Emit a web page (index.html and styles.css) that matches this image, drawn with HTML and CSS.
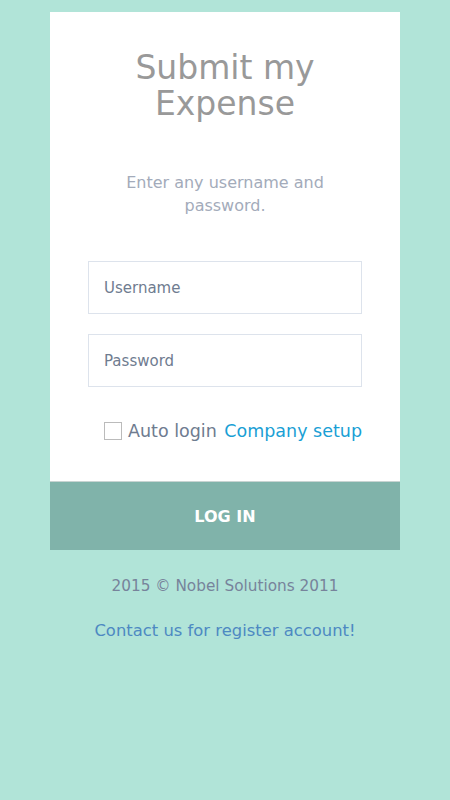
FILE: index.html
```html
<!DOCTYPE html>
<html lang="en">
<head>
  <meta charset="UTF-8">
  <meta name="viewport" content="width=device-width, initial-scale=1.0">
  <title>Submit my Expense</title>
  <link rel="stylesheet" href="styles.css">
</head>
<body>
  <!-- Login Card -->
  <section class="login-card">
    <div class="login-body">
      <h1>Submit my Expense</h1>
      <p class="hint">Enter any username and password.</p>

      <input type="text" class="field" placeholder="Username">
      <input type="password" class="field" placeholder="Password">

      <div class="options">
        <label class="auto-login">
          <span class="box"></span>
          Auto login
        </label>
        <a href="#" class="setup">Company setup</a>
      </div>
    </div>
    <button class="login-btn">LOG IN</button>
  </section>

  <!-- Footer -->
  <footer>
    <p class="copy">2015 &copy; Nobel Solutions 2011</p>
    <a href="#" class="contact">Contact us for register account!</a>
  </footer>
</body>
</html>
```

FILE: styles.css
```css
body {
  font-family: "DejaVu Sans", sans-serif;
  margin: 0;
  padding: 0;
  background-color: #b1e4d8;
  color: #333;
}
.login-card {
  width: 350px;
  margin: 12px auto 0;
  background-color: #fff;
}
.login-body {
  padding: 38px 38px 40px;
  display: flex;
  flex-direction: column;
}
.login-body h1 {
  margin: 0;
  font-size: 33px;
  font-weight: normal;
  line-height: 36px;
  color: #999;
  text-align: center;
}
.hint {
  margin: 49px 10px 44px;
  font-size: 16px;
  line-height: 23px;
  color: #a3abba;
  text-align: center;
}
.field {
  height: 53px;
  box-sizing: border-box;
  border: 1px solid #dde3ec;
  padding: 0 15px;
  margin: 0 0 20px;
  font-family: inherit;
  font-size: 15px;
  outline: none;
}
.field::placeholder {
  color: #6f7c90;
}
.options {
  display: flex;
  justify-content: space-between;
  align-items: center;
  padding-left: 16px;
  margin-top: 14px;
  font-size: 17.5px;
}
.auto-login {
  display: flex;
  align-items: center;
  gap: 6px;
  color: #6f7c90;
}
.box {
  width: 16px;
  height: 16px;
  border: 1px solid #bbb;
}
.setup {
  color: #1a9fd5;
  text-decoration: none;
}
.login-btn {
  display: block;
  width: 100%;
  height: 69px;
  border: none;
  border-top: 1px solid #c8d4d2;
  background-color: #80b3aa;
  color: #fff;
  font-family: inherit;
  font-size: 16px;
  font-weight: bold;
}
footer {
  text-align: center;
  padding-top: 27px;
}
.copy {
  margin: 0 0 26px;
  font-size: 15.3px;
  color: #77839b;
}
.contact {
  font-size: 16.4px;
  color: #4d89c2;
  text-decoration: none;
}
```
